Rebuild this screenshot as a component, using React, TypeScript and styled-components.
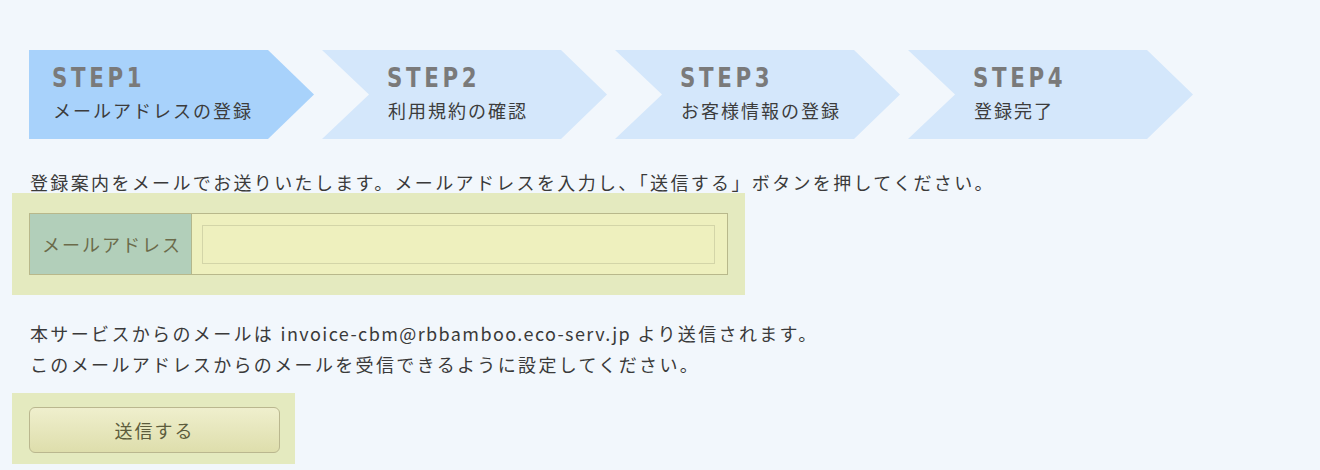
import React from "react";
import styled, { createGlobalStyle } from "styled-components";

const GlobalStyle = createGlobalStyle`
  html, body {
    margin: 0;
    padding: 0;
    background: #f2f7fc;
  }
  body {
    font-family: "Noto Sans CJK JP", "Noto Sans", sans-serif;
    color: #3a3a3a;
  }
`;

const Page = styled.div`
  width: 1320px;
  height: 470px;
  box-sizing: border-box;
  padding: 50px 12px 0;
  overflow: hidden;
`;

const Steps = styled.ol`
  display: flex;
  gap: 8px;
  list-style: none;
  margin: 0 0 0 17px;
  padding: 0;
`;

const Step = styled.li<{ $active?: boolean; $first?: boolean }>`
  width: 285px;
  height: 89px;
  box-sizing: border-box;
  padding: 13px 0 0 ${(p) => (p.$first ? 23 : 65)}px;
  background: ${(p) => (p.$active ? "#a8d2fb" : "#d4e7fb")};
  clip-path: ${(p) =>
    p.$first
      ? "polygon(0 0, 239px 0, 285px 44.5px, 239px 89px, 0 89px)"
      : "polygon(0 0, 239px 0, 285px 44.5px, 239px 89px, 0 89px, 47px 44.5px)"};
  display: flex;
  flex-direction: column;
  align-items: flex-start;
`;

const StepNo = styled.span`
  display: inline-block;
  font-family: "DejaVu Sans", sans-serif;
  font-weight: bold;
  font-size: 26px;
  line-height: 30px;
  letter-spacing: 4.5px;
  color: #7a7a7a;
  transform: scaleX(0.82);
  transform-origin: left center;
`;

const StepName = styled.span`
  margin-top: 5px;
  margin-left: 1px;
  font-size: 18px;
  line-height: 24px;
  letter-spacing: 2px;
  color: #3c3c3c;
`;

const Text = styled.p<{ $lh: number }>`
  margin: 0;
  padding-left: 18px;
  font-size: 18px;
  line-height: ${(p) => p.$lh}px;
  letter-spacing: 2.35px;
  color: #3a3a3a;
`;

const Mail = styled.span`
  letter-spacing: 1.4px;
`;

const Intro = styled(Text)`
  margin-top: 32px;
`;

const Notice = styled(Text)`
  margin-top: 23px;
`;

const Highlight = styled.div<{ $w: number }>`
  width: ${(p) => p.$w}px;
  box-sizing: border-box;
  background: #e4eabf;
`;

const FormBox = styled(Highlight)`
  padding: 20px 17px;
`;

const ButtonBox = styled(Highlight)`
  margin-top: 13px;
  padding: 14px 15px 11px 17px;
`;

const FieldRow = styled.div`
  display: flex;
  height: 62px;
  box-sizing: border-box;
  border: 1px solid #b8b88b;
  background: #eef0be;
`;

const Label = styled.label`
  width: 162px;
  box-sizing: border-box;
  padding-left: 12px;
  display: flex;
  align-items: center;
  background: #b2cfba;
  border-right: 1px solid #b3b78c;
  font-size: 18px;
  letter-spacing: 2px;
  color: #6b6b4a;
`;

const FieldCell = styled.div`
  flex: 1;
  display: flex;
  align-items: center;
  padding: 0 12px 0 10px;
`;

const Input = styled.input`
  width: 100%;
  height: 39px;
  box-sizing: border-box;
  border: 1px solid #d3d5a8;
  background: #eef0be;
  outline: none;
  font-size: 18px;
  font-family: inherit;
`;

const SubmitButton = styled.button`
  width: 251px;
  height: 46px;
  border: 1px solid #bab78f;
  border-radius: 6px;
  background: linear-gradient(#efefcd, #dedeac);
  font-family: "Noto Sans CJK JP", "Noto Sans", sans-serif;
  font-size: 18px;
  letter-spacing: 2px;
  color: #5c5c3c;
  cursor: pointer;
  padding: 0;
`;

const steps = [
  { no: "STEP1", name: "メールアドレスの登録" },
  { no: "STEP2", name: "利用規約の確認" },
  { no: "STEP3", name: "お客様情報の登録" },
  { no: "STEP4", name: "登録完了" },
];

export default function App() {
  return (
    <>
      <GlobalStyle />
      <Page>
        <Steps>
          {steps.map((s, i) => (
            <Step key={s.no} $active={i === 0} $first={i === 0}>
              <StepNo>{s.no}</StepNo>
              <StepName>{s.name}</StepName>
            </Step>
          ))}
        </Steps>
        <Intro $lh={22}>
          登録案内をメールでお送りいたします。メールアドレスを入力し、「送信する」ボタンを押してください。
        </Intro>
        <FormBox $w={733}>
          <FieldRow>
            <Label htmlFor="mail">メールアドレス</Label>
            <FieldCell>
              <Input id="mail" type="email" />
            </FieldCell>
          </FieldRow>
        </FormBox>
        <Notice $lh={31}>
          本サービスからのメールは <Mail>invoice-cbm@rbbamboo.eco-serv.jp</Mail> より送信されます。
          <br />
          このメールアドレスからのメールを受信できるように設定してください。
        </Notice>
        <ButtonBox $w={283}>
          <SubmitButton type="button">送信する</SubmitButton>
        </ButtonBox>
      </Page>
    </>
  );
}
